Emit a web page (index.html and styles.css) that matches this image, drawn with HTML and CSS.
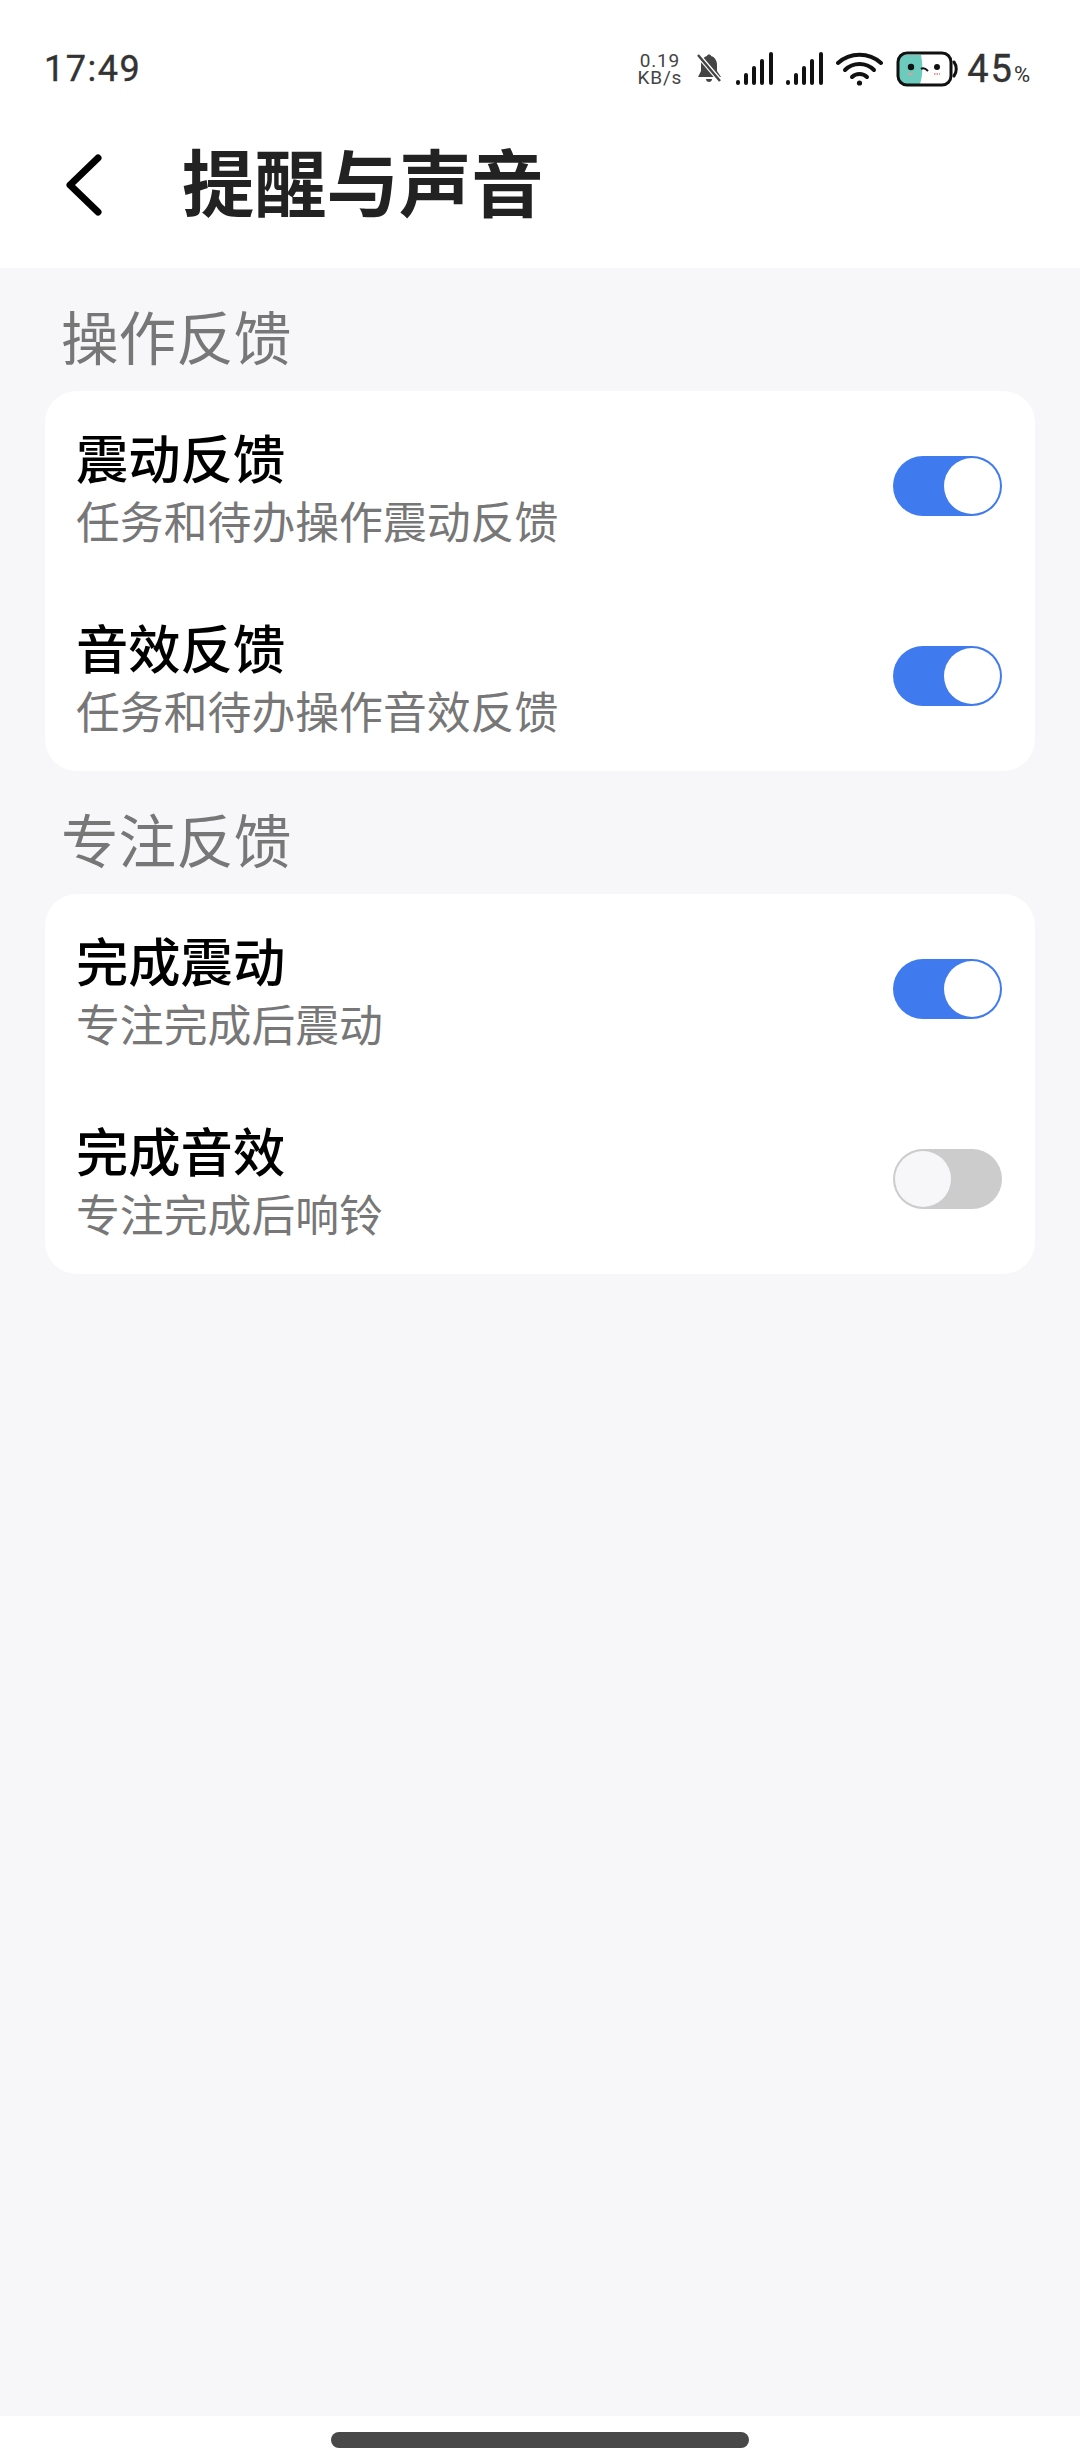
FILE: index.html
```html
<!DOCTYPE html>
<html lang="zh-CN">
<head>
    <meta charset="UTF-8">
    <meta name="viewport" content="width=device-width, initial-scale=1.0">
    <title>提醒与声音</title>
    <link rel="stylesheet" href="styles.css">
</head>
<body>
    <div class="top">
        <div class="statusbar">
            <div class="time">17:49</div>
            <div class="status-icons">
                <div class="speed">0.19<br>KB/s</div>
                <svg class="ic-bell" width="28" height="32" viewBox="0 0 28 32">
                    <path d="M12 3 C12 1 16 1 16 3 C20 4 22 8 22 12 L22 18 L26 24 L3 24 L6 18 L6 12 C6 8 8 4 12 3 Z" fill="#444"/>
                    <path d="M11 26 C11 30 17 30 17 26 Z" fill="#444"/>
                    <path d="M4 3 L26 29" stroke="#fff" stroke-width="5"/>
                    <path d="M3 2 L25 28" stroke="#444" stroke-width="2.4"/>
                </svg>
                <svg class="ic-signal" width="37" height="34" viewBox="0 0 37 34">
                    <rect x="0" y="28" width="4" height="5" rx="2" fill="#111"/>
                    <rect x="8" y="21" width="4" height="12" rx="2" fill="#111"/>
                    <rect x="16" y="14" width="4" height="19" rx="2" fill="#111"/>
                    <rect x="24" y="7" width="4" height="26" rx="2" fill="#111"/>
                    <rect x="33" y="0" width="4" height="33" rx="2" fill="#111"/>
                </svg>
                <svg class="ic-signal" width="37" height="34" viewBox="0 0 37 34">
                    <rect x="0" y="28" width="4" height="5" rx="2" fill="#111"/>
                    <rect x="8" y="21" width="4" height="12" rx="2" fill="#111"/>
                    <rect x="16" y="14" width="4" height="19" rx="2" fill="#111"/>
                    <rect x="24" y="7" width="4" height="26" rx="2" fill="#111"/>
                    <rect x="33" y="0" width="4" height="33" rx="2" fill="#111"/>
                </svg>
                <svg class="ic-wifi" width="47" height="34" viewBox="0 0 47 34">
                    <g fill="none" stroke="#111" stroke-width="4" stroke-linecap="round">
                        <path d="M2 11 C14 0 33 0 45 11"/>
                        <path d="M9 18 C17 10 30 10 38 18"/>
                        <path d="M16 25 C20 21 27 21 31 25"/>
                    </g>
                    <circle cx="23.500" cy="31" r="2.600" fill="#111"/>
                </svg>
                <svg class="ic-battery" width="62" height="36" viewBox="0 0 62 36">
                    <path d="M5 4 H25 C27 14 27 24 24 33 H7 C4 33 3 31 3 28 V7 C3 5 3 4 5 4 Z" fill="#6ccbbd"/>
                    <rect x="2" y="2" width="53" height="32" rx="9" fill="none" stroke="#111" stroke-width="3"/>
                    <path d="M58 11 C61 15 61 21 58 25" fill="none" stroke="#111" stroke-width="3" stroke-linecap="round"/>
                    <circle cx="15" cy="16" r="3.200" fill="#111"/>
                    <circle cx="41" cy="16" r="3" fill="#111"/>
                    <path d="M25 18 C28 16 30 18 32 20" fill="none" stroke="#111" stroke-width="2"/>
                    <path d="M12 23 H18 M38 23 H44" stroke="#e99" stroke-width="2" stroke-dasharray="1.500 1"/>
                </svg>
                <div class="level">45<span class="pct">%</span></div>
            </div>
        </div>
        <div class="appbar">
            <svg class="back" width="38" height="62" viewBox="0 0 38 62">
                <path d="M33 4 L5 31 L33 58" fill="none" stroke="#000" stroke-width="7" stroke-linecap="round" stroke-linejoin="round"/>
            </svg>
            <h1>提醒与声音</h1>
        </div>
    </div>

    <div class="content">
        <div class="section-title">操作反馈</div>
        <div class="card">
            <div class="row">
                <div class="row-text">
                    <div class="row-title">震动反馈</div>
                    <div class="row-sub">任务和待办操作震动反馈</div>
                </div>
                <div class="switch on"><div class="knob"></div></div>
            </div>
            <div class="row">
                <div class="row-text">
                    <div class="row-title">音效反馈</div>
                    <div class="row-sub">任务和待办操作音效反馈</div>
                </div>
                <div class="switch on"><div class="knob"></div></div>
            </div>
        </div>

        <div class="section-title">专注反馈</div>
        <div class="card">
            <div class="row">
                <div class="row-text">
                    <div class="row-title">完成震动</div>
                    <div class="row-sub">专注完成后震动</div>
                </div>
                <div class="switch on"><div class="knob"></div></div>
            </div>
            <div class="row">
                <div class="row-text">
                    <div class="row-title">完成音效</div>
                    <div class="row-sub">专注完成后响铃</div>
                </div>
                <div class="switch"><div class="knob"></div></div>
            </div>
        </div>
    </div>

    <div class="navbar"><div class="home-pill"></div></div>
</body>
</html>
```

FILE: styles.css
```css
* {
    box-sizing: border-box;
}

html, body {
    height: 100%;
}

body {
    margin: 0;
    display: flex;
    flex-direction: column;
    font-family: "Noto Sans CJK SC", "Noto Sans", sans-serif;
    background-color: #fff;
    color: #000;
}

.top {
    height: 268px;
    background-color: #fff;
}

.statusbar {
    height: 104px;
    padding: 34px 50px 0 44px;
    display: flex;
    justify-content: space-between;
    align-items: center;
}

.time {
    font-family: Roboto, sans-serif;
    font-size: 36px;
    font-weight: 400;
    letter-spacing: 1.5px;
    color: #333;
    -webkit-text-stroke: 0.4px #333;
}

.status-icons {
    display: flex;
    align-items: center;
    gap: 13px;
}

.speed {
    text-align: center;
    font-family: Roboto, sans-serif;
    font-size: 19px;
    line-height: 17px;
    letter-spacing: 0.8px;
    color: #444;
}

.level {
    margin-left: -4px;
    font-family: Roboto, sans-serif;
    font-size: 38px;
    font-weight: 400;
    letter-spacing: 2px;
    color: #333;
    -webkit-text-stroke: 0.4px #333;
}

.pct {
    font-size: 22px;
    letter-spacing: 0;
    -webkit-text-stroke: 0;
}

.appbar {
    height: 164px;
    padding-left: 65px;
    display: flex;
    align-items: center;
}

.back {
    margin-top: -2px;
}

h1 {
    margin: -12px 0 0 79px;
    font-size: 72.300px;
    font-weight: 700;
    line-height: 100px;
    color: #222;
}

.content {
    flex: 1;
    padding: 0 45px;
    background-color: #f7f7f9;
}

.section-title {
    height: 123px;
    padding: 25px 0 0 16px;
    font-size: 57.600px;
    line-height: 84px;
    color: #777;
}

.card {
    background-color: #fff;
    border-radius: 32px;
}

.row {
    height: 190px;
    padding: 3px 33px 0 31px;
    display: flex;
    justify-content: space-between;
    align-items: center;
}

.row-title {
    font-size: 52.300px;
    font-weight: 500;
    line-height: 64px;
}

.row-sub {
    font-size: 43.850px;
    line-height: 64px;
    color: #777;
}

.switch {
    width: 109px;
    height: 60px;
    padding: 2px;
    margin-top: -3px;
    display: flex;
    border-radius: 30px;
    background-color: #ccc;
}

.switch.on {
    justify-content: flex-end;
    background-color: #3f7bef;
}

.knob {
    width: 56px;
    height: 56px;
    border-radius: 50%;
    background-color: #f7f7f9;
}

.switch.on .knob {
    background-color: #fff;
}

.navbar {
    height: 44px;
    padding-top: 16px;
    background-color: #fff;
}

.home-pill {
    width: 418px;
    height: 16px;
    margin: 0 auto;
    border-radius: 8px;
    background-color: #484848;
}
```
